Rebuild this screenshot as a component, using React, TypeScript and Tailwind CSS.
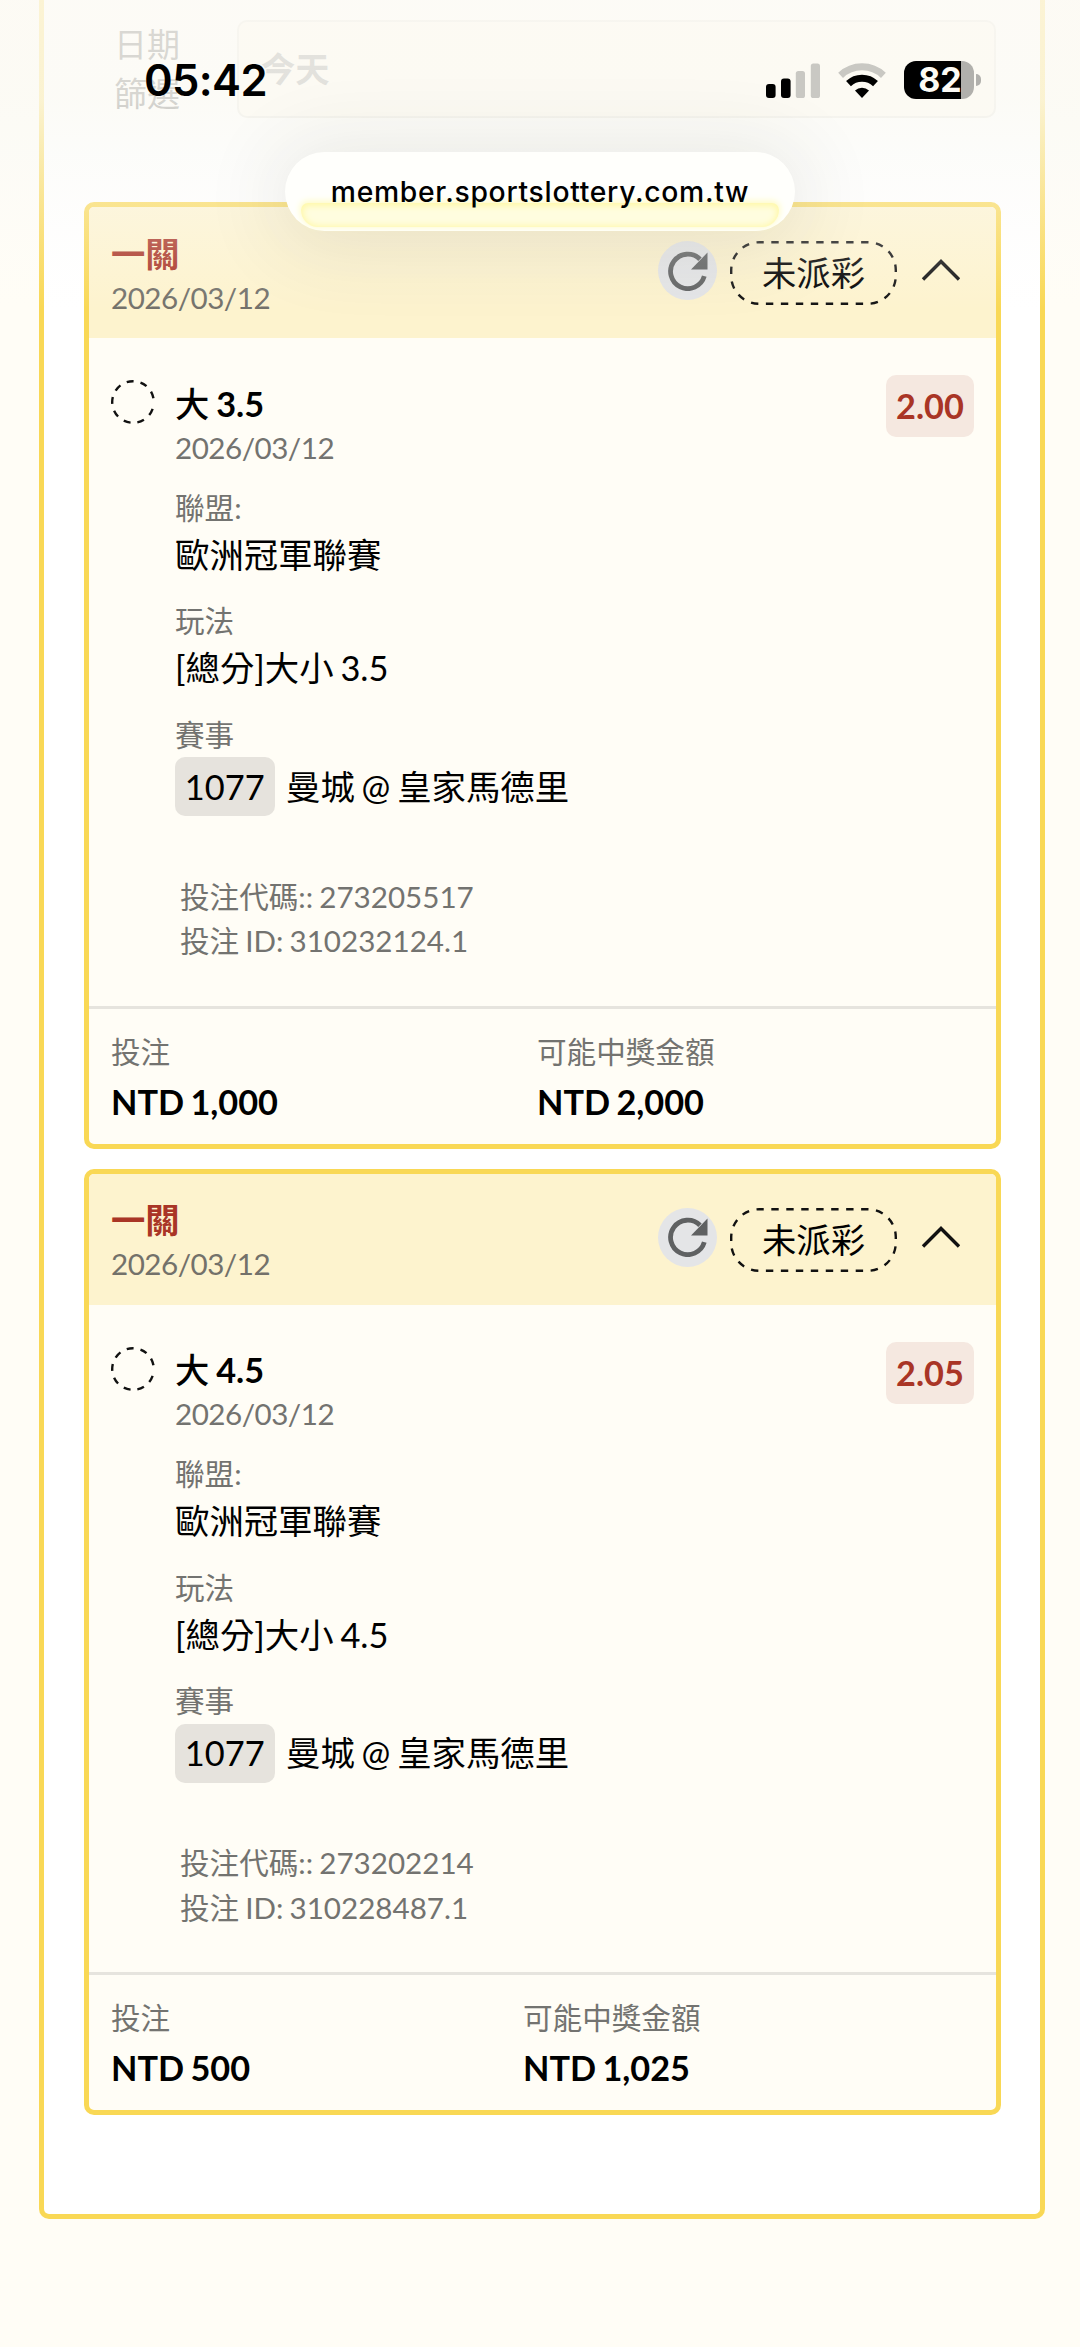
import type { ReactNode } from 'react';
import { clsx } from 'clsx';

type Bet = {
  id: string;
  title: string;
  date: string;
  side: string;
  line: string;
  odds: string;
  league: string;
  market: string;
  matchNo: string;
  match: string;
  code: string;
  betId: string;
  stake: string;
  payout: string;
  stakeCol: string;
};

const bets: Bet[] = [
  {
    id: 'bet-1',
    title: '一關',
    date: '2026/03/12',
    side: '大',
    line: '3.5',
    odds: '2.00',
    league: '歐洲冠軍聯賽',
    market: '[總分]大小 3.5',
    matchNo: '1077',
    match: '曼城 @ 皇家馬德里',
    code: '273205517',
    betId: '310232124.1',
    stake: 'NTD 1,000',
    payout: 'NTD 2,000',
    stakeCol: 'w-[426px]',
  },
  {
    id: 'bet-2',
    title: '一關',
    date: '2026/03/12',
    side: '大',
    line: '4.5',
    odds: '2.05',
    league: '歐洲冠軍聯賽',
    market: '[總分]大小 4.5',
    matchNo: '1077',
    match: '曼城 @ 皇家馬德里',
    code: '273202214',
    betId: '310228487.1',
    stake: 'NTD 500',
    payout: 'NTD 1,025',
    stakeCol: 'w-[412px]',
  },
];

const RefreshIcon = () => (
  <span className="flex h-[59px] w-[59px] items-center justify-center rounded-full bg-[#e4e5e7]">
    <svg width="40" height="40" viewBox="0 0 40 40" fill="none">
      <path d="M36.3 25.2A17.2 17.2 0 1 1 32 8.3" stroke="#5f6162" strokeWidth="4.8" />
      <path d="M39.5 1.5v17H23z" fill="#5f6162" />
    </svg>
  </span>
);

const StatusPill = ({ label }: { label: string }) => (
  <span className="relative flex h-16 w-[167px] items-center justify-center text-[34.3px] text-black">
    <svg className="absolute inset-0" width="167" height="64" fill="none">
      <rect x="1.2" y="1.2" width="164.6" height="61.6" rx="28" stroke="#111" strokeWidth="2.4" strokeDasharray="7.4 7.57" strokeDashoffset="-12.1" />
    </svg>
    {label}
  </span>
);

const Field = ({ label, children }: { label: string; children: ReactNode }) => (
  <div>
    <p className="text-[29.6px] leading-[44px] text-[#737370]">{label}</p>
    <div className="flex h-[50px] items-center text-[34.4px] leading-[50px]">{children}</div>
  </div>
);

const BetCard = ({ bet }: { bet: Bet }) => (
  <article className="h-[946.5px] overflow-hidden rounded-[10px] border-[5px] border-[#f9d855] bg-[#fffdf6]">
    <header className="flex h-[131px] justify-between bg-[#fdf3ce] pl-[22px] pr-[35px]">
      <div className="pt-[22.5px]">
        <h2 className="text-[34.3px] font-bold leading-[48px] text-[#a93526]">{bet.title}</h2>
        <p className="text-[29.6px] leading-[40px] tracking-[-0.5px] text-[#73716a]">{bet.date}</p>
      </div>
      <div className="flex items-start pt-[34px]">
        <RefreshIcon />
        <div className="ml-[13px]">
          <StatusPill label="未派彩" />
        </div>
        <svg className="ml-[24px] mt-[17px]" width="40" height="24" viewBox="0 0 40 24" fill="none">
          <path d="M2 21.5 20 3.5l18 18" stroke="#111" strokeWidth="3.4" />
        </svg>
      </div>
    </header>

    <div className="flex h-[667.5px] pl-[22px] pr-[22px]">
      <svg className="mt-[42px] shrink-0" width="44" height="44" fill="none">
        <circle cx="22" cy="22" r="20.8" stroke="#111" strokeWidth="2.4" strokeDasharray="7 7" strokeDashoffset="-7" />
      </svg>
      <div className="ml-5 flex-1 pt-[43.5px]">
        <h3 className="text-[34.3px] font-bold leading-[44px] [word-spacing:-1.5px]">
          <span className="font-medium">{bet.side}</span> {bet.line}
        </h3>
        <p className="text-[29.6px] leading-[44px] tracking-[-0.5px] text-[#737370]">{bet.date}</p>
        <div className="mt-4 flex flex-col gap-[19.5px] [word-spacing:-2px]">
          <Field label="聯盟:">{bet.league}</Field>
          <Field label="玩法">{bet.market}</Field>
          <Field label="賽事">
            <span className="mt-[10px] flex h-[59px] w-[99.5px] shrink-0 items-center justify-center rounded-[10px] bg-[#e6e3dd]">
              {bet.matchNo}
            </span>
            <span className="ml-[11.5px] mt-[10px]">{bet.match}</span>
          </Field>
        </div>
        <div className="ml-[5px] mt-[68px] text-[29.6px] leading-[44.5px] text-[#737370] [word-spacing:-1.5px]">
          <p>投注代碼:: {bet.code}</p>
          <p>投注 ID: {bet.betId}</p>
        </div>
      </div>
      <span className="mt-[37px] flex h-[62px] w-[88px] items-center justify-center rounded-[10px] bg-[#f5e8e0] text-[34.3px] font-bold text-[#a93526]">
        {bet.odds}
      </span>
    </div>

    <footer className="flex border-t-[3px] border-[#e6e4de] pl-[22px] pt-[21px] [word-spacing:-2px]">
      <div className={clsx('shrink-0', bet.stakeCol)}>
        <p className="text-[29.6px] leading-[44px] text-[#737370]">投注</p>
        <p className="text-[34.3px] font-bold leading-[55px]">{bet.stake}</p>
      </div>
      <div>
        <p className="text-[29.6px] leading-[44px] text-[#737370]">可能中獎金額</p>
        <p className="text-[34.3px] font-bold leading-[55px]">{bet.payout}</p>
      </div>
    </footer>
  </article>
);

const StatusBar = () => (
  <div className="absolute inset-x-0 top-[55px] flex h-[50px] items-center justify-between pl-[144px] pr-[99px] font-['Inter','Liberation_Sans',sans-serif]">
    <span className="pt-0.5 text-[43.5px] font-semibold leading-none tracking-[-0.6px] text-black">05:42</span>
    <div className="flex items-center">
      <svg width="54" height="35" viewBox="0 0 54 35">
        <rect x="0" y="21" width="9.6" height="14" rx="3" />
        <rect x="15" y="15.5" width="9.6" height="19.5" rx="3" />
        <rect x="29.8" y="8" width="9.2" height="27" rx="2.6" fill="#c9c8c3" />
        <rect x="44.8" y="0.5" width="9.2" height="34.5" rx="2.6" fill="#c9c8c3" />
      </svg>
      <svg className="ml-[18px]" width="48" height="35" viewBox="0 0 48 35" fill="none">
        <path d="M2.6 12.4a31 31 0 0 1 42.8 0" stroke="#c9c8c3" strokeWidth="7" />
        <path d="M10.5 20.6a19.5 19.5 0 0 1 27 0" stroke="#000" strokeWidth="7" />
        <path d="M24 35l-7-7.6a10.5 10.5 0 0 1 14 0z" fill="#000" />
      </svg>
      <div className="ml-[18px] flex items-center gap-0.5">
        <span className="flex h-[38px] w-[70px] items-center justify-center rounded-[12px] bg-[linear-gradient(90deg,#000_57px,#b1b0ac_57px)] pl-0.5 text-[34px] font-bold leading-none text-[#fdfbf5]">
          82
        </span>
        <span className="h-3 w-[5px] rounded-r-full bg-[#b1b0ac]" />
      </div>
    </div>
  </div>
);

const AddressPill = () => (
  <div className="absolute left-[285px] top-[152px] flex h-[79px] w-[510px] items-center justify-center rounded-full bg-[#fffffc] pt-px shadow-[0_6px_80px_10px_rgba(60,60,40,0.11)]">
    <span className="absolute bottom-[4px] left-[16px] right-[16px] h-[24px] rounded-b-[24px] rounded-t-[10px] bg-[#fffddf] shadow-[inset_0_1px_6px_2px_#fff8a8,0_-1px_6px_1px_#fffbc4]" />
    <span className="relative font-['Inter','Liberation_Sans',sans-serif] text-[28.3px] font-medium tracking-[0.7px] text-black">
      member.sportslottery.com.tw
    </span>
  </div>
);

export default function App() {
  return (
    <div className="relative h-[2347px] w-[1080px] overflow-hidden bg-[#fffdf6] font-['Lato','Noto_Sans_CJK_TC',sans-serif] text-black">
      <main className="ml-[39px] h-[2219px] w-[1006px] rounded-b-[10px] border-x-[5px] border-b-[5px] border-[#f9d855] bg-white pl-[40px] pr-[39px]">
        <div className="flex h-[202px] pt-5">
          <p className="ml-[30px] w-[123px] text-[33px] leading-[49px] text-[#555]">
            日期
            <br />
            篩選
          </p>
          <div className="mr-[5px] flex h-[98px] flex-1 items-center rounded-[10px] border-2 border-[#e6e4de] bg-[#fffaf0] pl-[22px] text-[34.3px] font-bold text-[#888]">
            今天
          </div>
        </div>
        <div className="flex flex-col gap-5">
          {bets.map((bet) => (
            <BetCard key={bet.id} bet={bet} />
          ))}
        </div>
      </main>

      {/* frosted strip behind the status bar */}
      <div className="pointer-events-none absolute inset-x-0 top-0 h-[310px] bg-[linear-gradient(180deg,rgba(252,250,244,0.8)_0px,rgba(251,250,244,0.78)_100px,rgba(250,250,246,0.58)_150px,rgba(251,250,247,0.36)_205px,rgba(252,251,249,0.18)_255px,rgba(255,255,255,0)_310px)]" />
      <AddressPill />
      <StatusBar />
    </div>
  );
}
